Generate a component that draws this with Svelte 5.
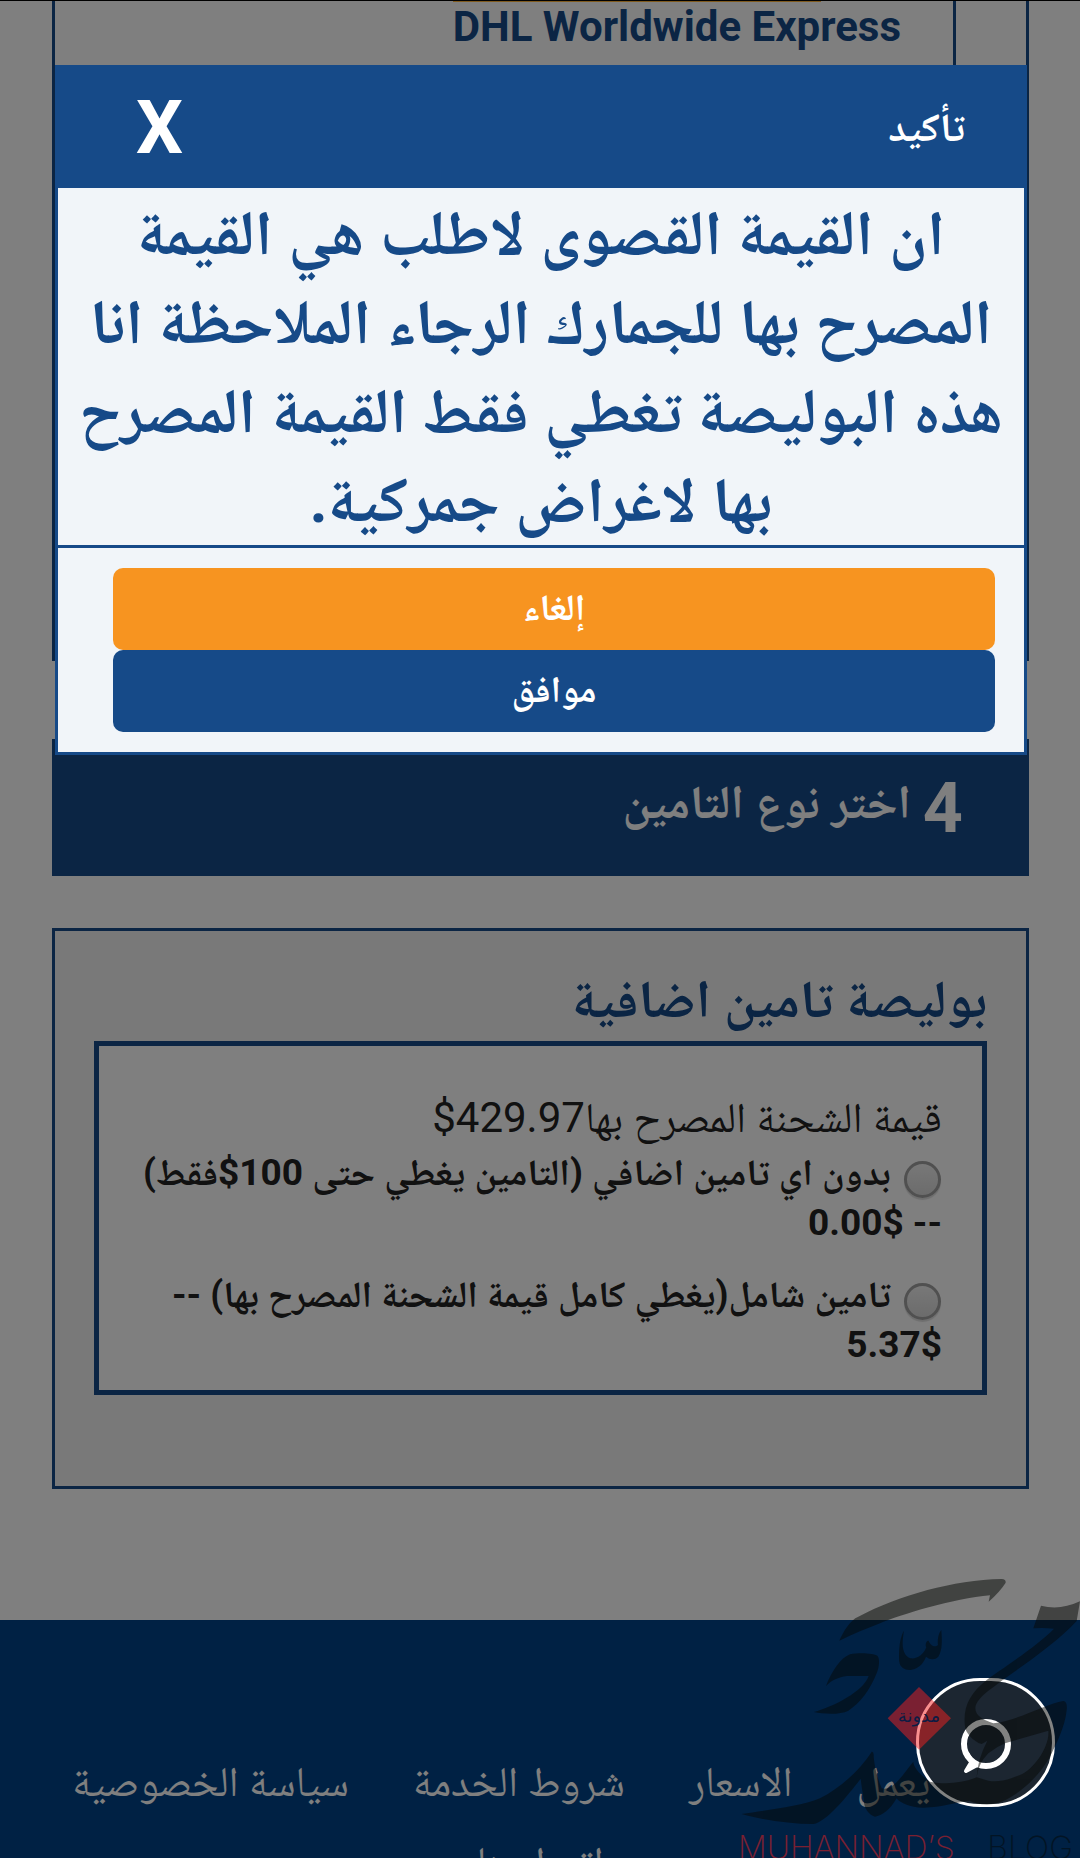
<script>
    let open = true
    let insurance = ''

    const options = [
        {
            id: 'basic',
            label: 'بدون اي تامين اضافي (التامين يغطي حتى 100$فقط)',
            price: '0.00$'
        },
        {
            id: 'full',
            label: 'تامين شامل(يغطي كامل قيمة الشحنة المصرح بها)',
            price: '5.37$'
        }
    ]

    const links = [
        'كيف يعمل',
        'الاسعار',
        'شروط الخدمة',
        'سياسة الخصوصية',
        'اتصل بنا'
    ]

    function close() {
        open = false
    }
</script>

<style>
    :global(body) {
        margin: 0;
        background: #fff;
    }

    .screen {
        --navy: #164a88;
        position: relative;
        height: 100vh;
        overflow: hidden;
        box-sizing: border-box;
        border-top: 1px solid #000;
        font-family: Roboto, 'Noto Naskh Arabic', sans-serif;
        color: #222;
    }

    .screen * {
        box-sizing: border-box;
    }

    main {
        padding: 0 51px 0 52px;
    }

    .carrier {
        display: flex;
        height: 660px;
        margin-bottom: 78px;
        border: 3px solid var(--navy);
        border-top: none;
    }

    .carrier .pick {
        width: 73px;
        border-left: 3px solid var(--navy);
    }

    .carrier .name {
        flex: 1;
        padding-right: 52px;
        color: var(--navy);
        font-size: 42px;
        font-weight: 700;
        line-height: 50px;
    }

    .carrier .name span {
        display: inline-block;
    }

    .carrier .name span::before {
        content: '';
        display: block;
        width: 368px;
        height: 1px;
        background: #ffb43c;
    }

    .step {
        display: flex;
        align-items: center;
        gap: 12px;
        height: 137px;
        margin: 0 0 52px;
        padding: 0 66px;
        background: var(--navy);
        color: #fff;
        font-size: 47px;
        font-weight: 700;
    }

    .step .number {
        font-size: 70px;
    }

    .panel {
        margin-bottom: 131px;
        padding: 33px 39px 91px;
        border: 3px solid var(--navy);
        background: #f2f2f2;
    }

    .panel h3 {
        margin: 0;
        padding-bottom: 6px;
        color: var(--navy);
        font-size: 53px;
        line-height: 71px;
    }

    .policy {
        margin: 0;
        padding: 42px 40px 0;
        border: 5px solid var(--navy);
        background: #fff;
    }

    .policy p {
        margin: 0;
        font-size: 42px;
        line-height: 60px;
    }

    .option {
        margin-bottom: 22px;
        font-size: 37px;
        font-weight: 700;
        line-height: 50px;
    }

    .option:last-child {
        margin-bottom: 20px;
    }

    .option input {
        appearance: none;
        width: 37px;
        height: 37px;
        margin: 0 1px 0 4px;
        border: 3px solid #a0a0a0;
        border-radius: 50%;
        background: linear-gradient(#f0f0f0, #d8d8d8);
        box-shadow: 0 2px 1px #ddd;
        vertical-align: -13px;
    }

    .option .dash {
        white-space: nowrap;
    }

    footer {
        height: 400px;
        padding-top: 134px;
        background: #004288;
    }

    footer nav {
        display: flex;
        flex-wrap: wrap;
        justify-content: center;
        gap: 24px 64px;
        padding: 0 60px;
    }

    footer a {
        color: #fff;
        font-size: 42px;
        line-height: 56px;
        text-decoration: none;
    }

    .backdrop {
        position: absolute;
        inset: 0;
        background: rgba(0, 0, 0, 0.5);
    }

    .dialog {
        position: absolute;
        top: 64px;
        right: 53px;
        left: 55px;
        border: 3px solid var(--navy);
        background: #f1f5f9;
    }

    .dialog header {
        display: flex;
        align-items: center;
        justify-content: space-between;
        height: 120px;
        padding: 0 59px 0 78px;
        background: var(--navy);
        color: #fff;
    }

    .dialog h2 {
        margin: 0;
        font-size: 40px;
        line-height: 50px;
    }

    .dialog .close {
        padding: 0;
        border: none;
        background: none;
        color: #fff;
        font: 700 74px/80px Roboto, sans-serif;
        cursor: pointer;
    }

    .dialog p {
        margin: 0;
        padding: 1px 12px 0;
        color: var(--navy);
        font-size: 63px;
        font-weight: 700;
        line-height: 89px;
        text-align: center;
    }

    .actions {
        display: flex;
        flex-direction: column;
        padding: 20px 29px 20px 55px;
        border-top: 3px solid var(--navy);
    }

    .actions button {
        height: 82px;
        padding: 4px 0 0;
        border: none;
        border-radius: 10px;
        background: var(--navy);
        color: #fff;
        font: inherit;
        font-size: 37px;
        font-weight: 700;
        cursor: pointer;
    }

    .actions .cancel {
        background: #f79420;
    }

    .chat {
        position: absolute;
        right: 25px;
        bottom: 51px;
        width: 139px;
        height: 129px;
        padding: 0;
        border: 3px solid #fff;
        border-radius: 64px;
        background: #1c2631;
    }

    .chat svg {
        display: block;
        width: 60px;
        height: 60px;
        margin: 6px auto 0;
    }

    .mark {
        position: absolute;
        right: 0;
        bottom: 0;
        width: 380px;
        height: 318px;
        pointer-events: none;
    }

    .mark .caption {
        font-family: Inter, sans-serif;
        font-size: 96px;
        font-weight: 200;
    }

    .mark .label {
        font-family: 'DejaVu Sans', sans-serif;
        font-size: 54px;
    }
</style>

<div class="screen" dir="rtl" lang="ar">
    <main>
        <section class="carrier">
            <div class="pick"></div>
            <div class="name"><span dir="ltr">DHL Worldwide Express</span></div>
        </section>

        <h2 class="step">
            <span class="number">4</span>
            <span>اختر نوع التامين</span>
        </h2>

        <section class="panel">
            <h3>بوليصة تامين اضافية</h3>
            <div class="policy">
                <p>قيمة الشحنة المصرح بها<bdi dir="ltr">$429.97</bdi></p>
                {#each options as option}
                    <div class="option">
                        <input
                            type="radio"
                            name="insurance"
                            id={option.id}
                            value={option.id}
                            bind:group={insurance} />
                        <label for={option.id}>
                            {option.label}
                            <span class="dash">--</span>
                            <bdi dir="ltr">{option.price}</bdi>
                        </label>
                    </div>
                {/each}
            </div>
        </section>
    </main>

    <footer>
        <nav>
            {#each links as link}
                <a href="#top">{link}</a>
            {/each}
        </nav>
    </footer>

    {#if open}
        <div class="backdrop"></div>
        <div class="dialog" role="dialog" aria-labelledby="dialog-title">
            <header>
                <h2 id="dialog-title">تأكيد</h2>
                <button class="close" on:click={close}>X</button>
            </header>
            <p>
                ان القيمة القصوى لاطلب هي القيمة المصرح بها للجمارك الرجاء
                الملاحظة انا هذه البوليصة تغطي فقط القيمة المصرح بها لاغراض
                جمركية.
            </p>
            <div class="actions">
                <button class="cancel" on:click={close}>إلغاء</button>
                <button on:click={close}>موافق</button>
            </div>
        </div>
    {/if}

    <button class="chat" aria-label="محادثة">
        <svg viewBox="0 0 60 60" fill="none" stroke="#fff">
            <circle cx="30" cy="28" r="22" stroke-width="6" />
            <path d="M11 37 16 45 10 55 23 48" stroke-width="4" stroke-linejoin="round" fill="#fff" />
        </svg>
    </button>

    <svg class="mark" viewBox="0 0 1140 954" direction="ltr">
        <g fill="#050805" opacity="0.5">
            <path
                d="M418 302C430 275 450 240 475 230C600 165 760 120 905 117Q918 117 917 128Q900 155 866 185L870 166C760 175 600 225 540 250C500 265 460 282 418 302Z" />
            <path
                d="M612 272C595 300 597 350 598 365C600 385 620 392 635 389C660 385 672 365 678 350C690 360 705 360 715 350C728 330 726 300 724 270C715 280 712 300 714 315C705 325 690 315 686 303C680 300 674 315 679 322C670 345 650 358 632 355C605 345 605 310 612 272Z" />
            <path
                d="M378 438C395 395 420 355 450 343C480 337 520 340 532 347C540 355 538 380 530 400C510 450 480 490 445 512C420 525 370 522 342 516C400 500 490 455 506 408L440 408C415 412 395 420 378 438Z" />
            <path
                fill-rule="evenodd"
                d="M1023 197Q1080 212 1140 184L1130 243C1050 330 900 420 850 465C830 485 820 500 830 520C838 532 850 540 880 550C960 540 1040 490 1090 483Q1103 485 1100 510C1095 560 1070 610 1050 650C1010 720 940 780 880 792C850 796 825 790 808 782C760 790 720 800 690 802C640 808 600 790 590 775C570 810 545 828 525 830C505 825 490 800 492 780C486 750 484 730 482 716C440 770 380 845 340 852C270 852 190 840 125 822C200 810 300 800 360 775C420 745 480 690 515 635Q522 635 521 650C524 680 530 710 545 745C580 755 610 700 640 665C640 680 655 700 690 725C740 735 790 728 830 712Q832 660 862 602L845 612C820 605 795 575 795 560C788 500 810 460 860 420C900 390 1010 320 1062 266Q1030 262 1000 265ZM915 610L1045 572C1050 620 1000 690 960 705C920 722 890 727 865 722L830 712Q835 670 865 640Q890 620 915 610Z" />
            <text class="caption" x="862" y="958">BLOG</text>
        </g>
        <g fill="#f42020" opacity="0.5">
            <path d="M657 441 753 535 657 629 563 535Z" />
            <text class="caption" x="114" y="958">MUHANNAD’S</text>
        </g>
        <text class="label" x="657" y="545" text-anchor="middle" fill="#0c1c44">مدونة</text>
    </svg>
</div>
